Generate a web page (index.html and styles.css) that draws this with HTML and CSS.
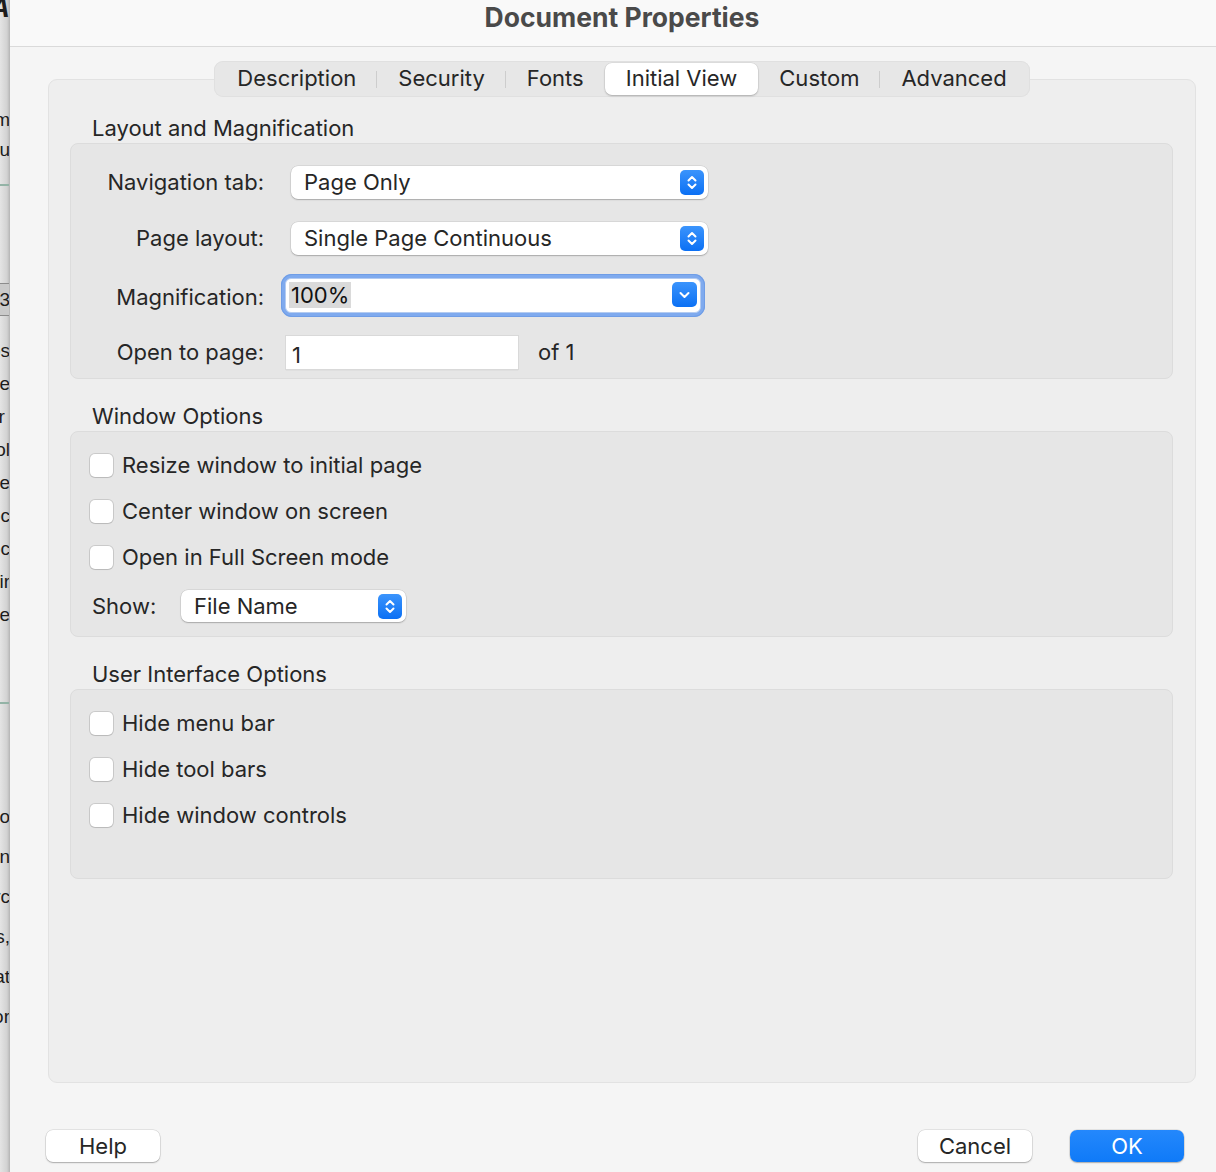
FILE: index.html
```html
<!doctype html>
<html lang="en">
  <head>
    <meta charset="UTF-8" />
    <meta name="viewport" content="width=device-width, initial-scale=1.0" />
    <title>Document Properties</title>
    <link rel="stylesheet" href="styles.css">
  </head>
  <body>
    <!-- the document window that sits behind the dialog -->
    <div class="behind" aria-hidden="true">
      <div class="doc-title">DATA</div>
      <div class="doc-line doc-first">from</div>
      <div class="doc-line">you</div>
      <div class="doc-rule doc-rule-top"></div>
      <div class="doc-cell">3</div>
      <div class="doc-para">
        <div>ops</div>
        <div>see</div>
        <div>r&nbsp;</div>
        <div>tool</div>
        <div>are</div>
        <div>doc</div>
        <div>doc</div>
        <div>fir</div>
        <div>the</div>
      </div>
      <div class="doc-rule doc-rule-bottom"></div>
      <div class="doc-para doc-para-wide">
        <div>to</div>
        <div>in</div>
        <div>arc</div>
        <div>as,</div>
        <div>that</div>
        <div>for</div>
      </div>
    </div>

    <div class="dialog">
      <header class="titlebar">Document Properties</header>

      <div class="content">
        <div class="tabview">
          <nav class="tabs">
            <span class="tab">Description</span>
            <span class="tab">Security</span>
            <span class="tab before-selected">Fonts</span>
            <span class="tab selected">Initial View</span>
            <span class="tab">Custom</span>
            <span class="tab">Advanced</span>
          </nav>

          <div class="panel">
            <h2 class="section-label">Layout and Magnification</h2>
            <div class="group form-grid">
              <label class="field-label">Navigation tab:</label>
              <div class="popup">
                <span>Page Only</span>
                <span class="stepper">
                  <svg width="24" height="25" viewBox="0 0 24 25"><path d="M8.5 10.5 12 7l3.5 3.5M8.5 14.5 12 18l3.5-3.5" /></svg>
                </span>
              </div>

              <label class="field-label">Page layout:</label>
              <div class="popup">
                <span>Single Page Continuous</span>
                <span class="stepper">
                  <svg width="24" height="25" viewBox="0 0 24 25"><path d="M8.5 10.5 12 7l3.5 3.5M8.5 14.5 12 18l3.5-3.5" /></svg>
                </span>
              </div>

              <label class="field-label field-label-low">Magnification:</label>
              <div class="combo">
                <div class="combo-field">
                  <span class="selection">100%</span>
                  <span class="stepper combo-button">
                    <svg width="25" height="25" viewBox="0 0 25 25"><path d="M8.5 11 12.5 15l4-4" /></svg>
                  </span>
                </div>
              </div>

              <label class="field-label">Open to page:</label>
              <div class="page-row">
                <div class="textfield">1</div>
                <span>of 1</span>
              </div>
            </div>

            <h2 class="section-label">Window Options</h2>
            <div class="group option-list">
              <div class="check"><span class="box"></span>Resize window to initial page</div>
              <div class="check"><span class="box"></span>Center window on screen</div>
              <div class="check"><span class="box"></span>Open in Full Screen mode</div>
              <div class="show-row">
                <span class="show-label">Show:</span>
                <div class="popup popup-small">
                  <span>File Name</span>
                  <span class="stepper">
                    <svg width="24" height="25" viewBox="0 0 24 25"><path d="M8.5 10.5 12 7l3.5 3.5M8.5 14.5 12 18l3.5-3.5" /></svg>
                  </span>
                </div>
              </div>
            </div>

            <h2 class="section-label">User Interface Options</h2>
            <div class="group option-list ui-options">
              <div class="check"><span class="box"></span>Hide menu bar</div>
              <div class="check"><span class="box"></span>Hide tool bars</div>
              <div class="check"><span class="box"></span>Hide window controls</div>
            </div>
          </div>
        </div>

        <footer class="buttons">
          <button type="button" class="btn">Help</button>
          <span class="spacer"></span>
          <button type="button" class="btn">Cancel</button>
          <button type="button" class="btn btn-default">OK</button>
        </footer>
      </div>
    </div>
  </body>
</html>
```

FILE: styles.css
```css
* {
  box-sizing: border-box;
}

html,
body {
  margin: 0;
  height: 100%;
}

body {
  display: flex;
  height: 1172px;
  overflow: hidden;
  font-family: Inter, "Noto Sans", sans-serif;
  font-size: 22px;
  color: #262626;
  background: #f5f5f5;
}

/* window behind the dialog, only a sliver shows */
.behind {
  flex: none;
  width: 10px;
  overflow: hidden;
  display: flex;
  flex-direction: column;
  background: linear-gradient(90deg, #e4e4e4, #d2d2d2 70%, #b4b4b4);
  font-family: "Liberation Sans", sans-serif;
  font-size: 19px;
  color: #1c1c1c;
}

.behind > div,
.doc-para > div {
  display: flex;
  justify-content: flex-end;
  white-space: nowrap;
}

.doc-title {
  height: 20px;
  line-height: 16px;
  font-weight: 700;
  font-style: italic;
  font-size: 28px;
}

.doc-line {
  height: 30px;
  line-height: 30px;
}

.doc-first {
  margin-top: 85px;
}

.doc-rule {
  height: 2px;
  background: #93b3a6;
}

.doc-rule-top {
  margin-top: 19px;
}

.doc-cell {
  margin-top: 97px;
  height: 33px;
  line-height: 31px;
  border-top: 1px solid #8c8c8c;
  border-bottom: 1px solid #8c8c8c;
  background: #cacaca;
}

.doc-para {
  display: flex;
  flex-direction: column;
  margin-top: 18px;
}

.doc-para > div {
  height: 33px;
  line-height: 33px;
}

.doc-rule-bottom {
  margin-top: 71px;
}

.doc-para-wide {
  margin-top: 93px;
}

.doc-para-wide > div {
  height: 40px;
  line-height: 40px;
}

/* dialog */
.dialog {
  flex: 1;
  display: flex;
  flex-direction: column;
  background: #f5f5f5;
  box-shadow: -1px 0 0 #b9b9b9;
}

.titlebar {
  flex: none;
  height: 47px;
  padding-left: 18px;
  border-bottom: 1px solid #dadada;
  background: #f9f9f9;
  text-align: center;
  font-weight: 700;
  font-size: 26.5px;
  line-height: 34px;
  color: #4a4a4a;
}

.content {
  flex: 1;
  display: flex;
  flex-direction: column;
  padding: 14px 20px 0 38px;
}

.tabview {
  display: flex;
  flex-direction: column;
}

.tabs {
  align-self: center;
  position: relative;
  z-index: 1;
  display: flex;
  padding: 2px;
  margin-bottom: -18px;
  border-radius: 9px;
  background: #e7e7e7;
  box-shadow: inset 0 0 0 1px #e0e0e0;
}

.tab {
  position: relative;
  height: 32px;
  padding: 0 21px;
  line-height: 31px;
  border-radius: 7px;
}

.tab::after {
  content: "";
  position: absolute;
  right: 0;
  top: 8px;
  width: 1px;
  height: 17px;
  background: #cdcdcd;
}

.tab:last-child::after,
.tab.before-selected::after,
.tab.selected::after {
  display: none;
}

.tab.selected {
  background: #fff;
  box-shadow: 0 0 0 0.5px rgba(0, 0, 0, 0.08), 0 1px 2px rgba(0, 0, 0, 0.22);
}

.panel {
  height: 1004px;
  padding: 35px 22px 0 21px;
  border: 1px solid #e2e2e2;
  border-radius: 9px;
  background: #eeeeee;
}

.section-label {
  margin: 0 0 2px 22px;
  font-size: 22px;
  font-weight: 400;
  line-height: 26px;
}

.group {
  border: 1px solid #dcdcdc;
  border-radius: 8px;
  background: #e6e6e6;
}

.group + .section-label {
  margin-top: 24px;
}

.form-grid {
  display: grid;
  grid-template-columns: 173px 1fr;
  grid-template-rows: 44px 44px 46px 44px;
  column-gap: 22px;
  row-gap: 12px;
  align-items: center;
  padding: 16px 20px 4px 20px;
}

.field-label {
  text-align: right;
}

.field-label-low {
  padding-top: 4px;
}

.popup {
  position: relative;
  display: flex;
  align-items: center;
  width: 417px;
  height: 33px;
  margin-left: 5px;
  padding-left: 13px;
  border-radius: 7px;
  background: #fff;
  box-shadow: 0 0 0 0.5px rgba(0, 0, 0, 0.12), 0 1px 1.5px rgba(0, 0, 0, 0.22);
}

.stepper {
  position: absolute;
  right: 4px;
  top: 4px;
  width: 24px;
  height: 25px;
  border-radius: 5px;
  background: linear-gradient(#3b94fc, #0b70f4);
}

.stepper svg {
  display: block;
}

.stepper path {
  fill: none;
  stroke: #fff;
  stroke-width: 2;
  stroke-linecap: round;
  stroke-linejoin: round;
}

.combo {
  width: 424px;
  height: 43px;
  margin-left: -5px;
  padding: 4px;
  border-radius: 11px;
  background: #7faaee;
  box-shadow: inset 0 0 0 1px #6f9de6;
}

.combo-field {
  position: relative;
  display: flex;
  align-items: center;
  height: 35px;
  padding-left: 3px;
  border: 1px solid #b3cbf1;
  border-radius: 6px;
  background: #fff;
}

.selection {
  padding: 0 2px;
  line-height: 26px;
  background: #dadada;
  color: #111;
}

.combo-button {
  right: 3px;
  top: 3px;
  width: 25px;
}

.page-row {
  display: flex;
  align-items: center;
  gap: 20px;
}

.textfield {
  width: 232px;
  height: 33px;
  padding: 3px 6px 0;
  line-height: 32px;
  background: #fff;
  box-shadow: 0 0 0 1px #d9d9d9, 0 1px 1px rgba(0, 0, 0, 0.18);
}

.option-list {
  display: flex;
  flex-direction: column;
  gap: 10px;
  padding: 15px 20px 12px 19px;
}

.ui-options {
  padding-bottom: 45px;
}

.check {
  display: flex;
  align-items: center;
  gap: 9px;
  height: 36px;
}

.box {
  width: 23px;
  height: 23px;
  border-radius: 5px;
  background: #fff;
  box-shadow: 0 0 0 1px rgba(0, 0, 0, 0.12), 0 1px 1px rgba(0, 0, 0, 0.08);
}

.show-row {
  display: flex;
  align-items: center;
  height: 36px;
  margin-top: 3px;
}

.show-label {
  width: 91px;
  padding-left: 2px;
}

.popup-small {
  width: 225px;
  height: 32px;
  margin-left: 0;
}

.buttons {
  display: flex;
  gap: 38px;
  padding-top: 47px;
  margin: 0 12px 0 -2px;
}

.spacer {
  flex: 1;
}

.btn {
  width: 114px;
  height: 32px;
  padding: 0;
  border: none;
  border-radius: 7px;
  background: #fff;
  font: inherit;
  color: #262626;
  box-shadow: 0 0 0 0.5px rgba(0, 0, 0, 0.14), 0 1px 1.5px rgba(0, 0, 0, 0.25);
}

.btn-default {
  background: linear-gradient(#2488fc, #0f7af8);
  color: #fff;
}
```
